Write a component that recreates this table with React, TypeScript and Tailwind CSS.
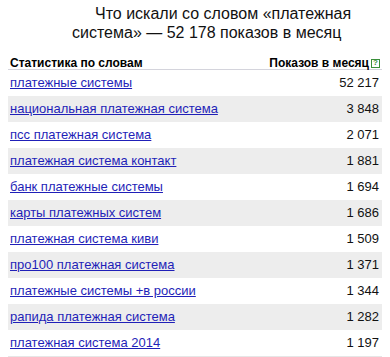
import React from "react";

const rows: [string, string][] = [
  ["платежные системы", "52 217"],
  ["национальная платежная система", "3 848"],
  ["псс платежная система", "2 071"],
  ["платежная система контакт", "1 881"],
  ["банк платежные системы", "1 694"],
  ["карты платежных систем", "1 686"],
  ["платежная система киви", "1 509"],
  ["про100 платежная система", "1 371"],
  ["платежные системы +в россии", "1 344"],
  ["рапида платежная система", "1 282"],
  ["платежная система 2014", "1 197"],
];

export default function App() {
  return (
    <div
      className="w-[390px] h-[357px] bg-white overflow-hidden text-black"
      style={{ fontFamily: '"Liberation Sans", Arial, sans-serif' }}
    >
      <div className="pt-[4px] text-[16px] leading-[19px] text-[#111]">
        <div className="pl-[95px] whitespace-nowrap">Что искали со словом «платежная</div>
        <div className="pl-[72px] whitespace-nowrap">система» — 52 178 показов в месяц</div>
      </div>
      <div className="mx-[8px] w-[374px]">
        <div className="h-[28px] flex items-end justify-between border-b border-[#d4d4dc] text-[12px] leading-[12px] font-bold pl-[2px] pr-[2px]">
          <span>Статистика по словам</span>
          <span className="flex items-center gap-[2px]">
            Показов в месяц
            <span className="inline-flex items-center justify-center w-[9px] h-[9px] border border-[#3a8f3a] text-[#3a8f3a] text-[8px] leading-none font-bold">
              ?
            </span>
          </span>
        </div>
        <div className="border-b border-[#e6e6e6]">
          {rows.map(([q, n], i) => (
            <div
              key={q}
              className={`h-[26px] flex items-center justify-between pl-[2px] pr-[3px] text-[13px] ${
                i % 2 === 1 ? "bg-[#ededed]" : "bg-white"
              }`}
            >
              <a href="#" className="text-[#1f1fb8] underline">
                {q}
              </a>
              <span className="text-[#111]">{n}</span>
            </div>
          ))}
        </div>
      </div>
    </div>
  );
}
